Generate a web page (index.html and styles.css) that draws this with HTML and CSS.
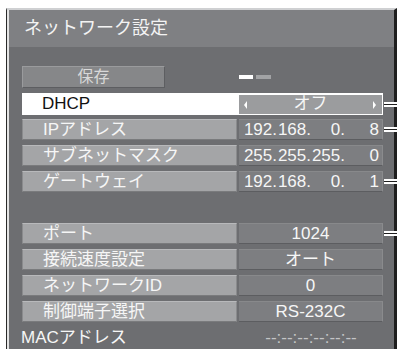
FILE: index.html
```html
<!DOCTYPE html>
<html lang="ja">
<head>
    <meta charset="UTF-8">
    <meta name="viewport" content="width=device-width, initial-scale=1.0">
    <title>ネットワーク設定</title>
    <link rel="stylesheet" href="styles.css">
</head>
<body>
    <div class="screen">
        <div class="title">ネットワーク設定</div>

        <div class="menu">
            <div class="top-row">
                <div class="save">保存</div>
                <div class="pager"><span class="on"></span><span></span></div>
            </div>

            <div class="row selected">
                <div class="label">DHCP</div>
                <div class="value"><span class="arrow left"></span>オフ<span class="arrow right"></span></div>
                <span class="link"></span>
            </div>
            <div class="row">
                <div class="label">IPアドレス</div>
                <div class="value ip"><span>192.</span><span>168.</span><span>0.</span><span>8</span></div>
                <span class="link"></span>
            </div>
            <div class="row">
                <div class="label">サブネットマスク</div>
                <div class="value ip"><span>255.</span><span>255.</span><span>255.</span><span>0</span></div>
            </div>
            <div class="row">
                <div class="label">ゲートウェイ</div>
                <div class="value ip"><span>192.</span><span>168.</span><span>0.</span><span>1</span></div>
                <span class="link"></span>
            </div>

            <div class="spacer"></div>

            <div class="row">
                <div class="label">ポート</div>
                <div class="value">1024</div>
                <span class="link"></span>
            </div>
            <div class="row">
                <div class="label">接続速度設定</div>
                <div class="value">オート</div>
            </div>
            <div class="row">
                <div class="label">ネットワークID</div>
                <div class="value">0</div>
            </div>
            <div class="row">
                <div class="label">制御端子選択</div>
                <div class="value">RS-232C</div>
            </div>
            <div class="row plain">
                <div class="label">MACアドレス</div>
                <div class="value mac">--:--:--:--:--:--</div>
            </div>
        </div>
    </div>
</body>
</html>
```

FILE: styles.css
```css
body {
    margin: 0;
    background: #ffffff;
    font-family: "Liberation Sans", "Noto Sans CJK JP", sans-serif;
    color: #f4f4f4;
}

.screen {
    margin: 8px 0 0 6px;
    height: 341px;
    border-left: 1px solid #2a2a2a;
    border-right: 3px solid #1e1e1e;
    border-top: 2px solid #cfd0d2;
    padding-left: 2px;
    background: #e4e4e4;
    position: relative;
}

.title {
    height: 37px;
    line-height: 37px;
    padding-left: 15px;
    font-size: 18px;
    background: #7f8083;
    color: #f3f3f3;
}

.menu {
    background: #6d6e71;
    height: 302px;
    padding: 19px 0 0 13px;
    box-sizing: border-box;
    display: flex;
    flex-direction: column;
    gap: 5px;
}

.top-row {
    display: grid;
    grid-template-columns: 215px 144px;
    column-gap: 2px;
    align-items: center;
    height: 22px;
}

.save {
    width: 143px;
    height: 22px;
    box-sizing: border-box;
    background: #868789;
    border: 1px solid;
    border-color: #9a9b9d #5d5e61 #5d5e61 #9a9b9d;
    text-align: center;
    font-size: 16px;
    line-height: 20px;
    color: #d8d8d8;
}

.pager {
    display: flex;
    gap: 3px;
}

.pager span {
    width: 15px;
    height: 4px;
    background: #a2a3a5;
}

.pager span.on {
    width: 14px;
    background: #ffffff;
}

.row {
    display: grid;
    grid-template-columns: 215px 144px;
    column-gap: 2px;
    height: 21px;
    width: 361px;
    position: relative;
    font-size: 17px;
}

.label {
    box-sizing: border-box;
    background: #a4a5a7;
    border: 1px solid;
    border-color: #b8b9bb #8a8b8d #7a7b7d #8a8b8d;
    padding-left: 20px;
    line-height: 19px;
    color: #f6f6f6;
    white-space: nowrap;
}

.value {
    box-sizing: border-box;
    background: #7d7e81;
    border-top: 1px solid #88898b;
    border-bottom: 1px solid #5c5d60;
    border-right: 1px solid #8a8b8d;
    text-align: center;
    line-height: 19px;
    color: #f6f6f6;
    white-space: nowrap;
}

.value.ip {
    text-align: left;
    padding-left: 4px;
}

.value.ip span {
    display: inline-block;
    width: 34px;
    text-align: right;
}

.row.selected {
    background: #ffffff;
    height: 22px;
    margin-bottom: -1px;
}

.row.selected .label {
    background: none;
    border: none;
    color: #111111;
    line-height: 22px;
}

.row.selected .value {
    position: relative;
    margin: 2px 1px 1px 0;
    border: none;
    background: #9b9c9e;
    line-height: 18px;
}

.arrow {
    position: absolute;
    top: 6px;
    width: 0;
    height: 0;
    border-top: 4px solid transparent;
    border-bottom: 4px solid transparent;
}

.arrow.left {
    left: 5px;
    border-right: 3px solid #ffffff;
}

.arrow.right {
    right: 6px;
    border-left: 3px solid #ffffff;
}

.link {
    position: absolute;
    left: 362px;
    top: 8px;
    width: 13px;
    height: 5px;
    background: linear-gradient(#ffffff 0 2px, #1e1e1e 2px 3px, #ffffff 3px 5px);
}

.row.selected .link {
    top: 9px;
}

.spacer {
    height: 21px;
}

.row.plain .label {
    background: none;
    border: none;
    padding-left: 0;
    margin-left: -1px;
    line-height: 21px;
}

.row.plain .value {
    background: none;
    border: none;
    font-size: 17px;
    line-height: 21px;
    color: #c4c5c7;
}
```
